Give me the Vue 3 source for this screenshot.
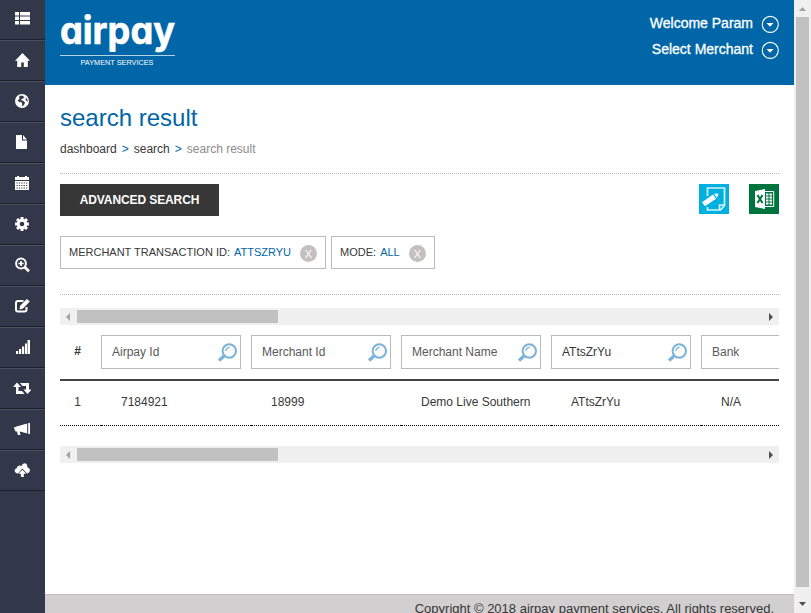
<script setup>
import { ref } from 'vue'

const menu = ['list', 'home', 'globe', 'file', 'calendar', 'cog', 'zoom', 'edit', 'signal', 'retweet', 'horn', 'cloud']
const account = ['Welcome Param', 'Select Merchant']
const filters = ref([
  { label: 'MERCHANT TRANSACTION ID:', value: 'ATTSZRYU', kind: 'long' },
  { label: 'MODE:', value: 'ALL', kind: 'short' },
])
const columns = ref([
  { name: 'Airpay Id', value: '', cell: '7184921' },
  { name: 'Merchant Id', value: '', cell: '18999' },
  { name: 'Merchant Name', value: '', cell: 'Demo Live Southern' },
  { name: 'Transaction Id', value: 'ATtsZrYu', cell: 'ATtsZrYu' },
  { name: 'Bank', value: '', cell: 'N/A' },
])
const teeth = [0, 45, 90, 135, 180, 225, 270, 315]
</script>

<template>
  <div class="screen">
    <nav class="side">
      <a v-for="m in menu" :key="m" class="side-item">
        <svg class="side-icon" viewBox="0 0 18 16" fill="#fff">
          <path v-if="m === 'list'" d="M2 1h4v3.500H2zM7 1h10v3.500H7zM2 5.500h4V9H2zM7 5.500h10V9H7zM2 10h4v3.500H2zM7 10h10v3.500H7z" />
          <path v-else-if="m === 'home'" d="M9.5 1 17 8.8h-2.2V15h-4v-4.500H8.200V15h-4V8.800H2z" />
          <g v-else-if="m === 'globe'">
            <circle cx="9" cy="8" r="7" />
            <path fill="#32374a" d="M8 2.5 5.6 4 6.8 5.2 4.7 7.5l1.2 1.3 2.6.5.8 1.6-.5 2.4 1.8-.8 1.5-3-2.4-2-2.2-.2 1.7-1.5L11 5 10.4 3zM12.6 4.2l1.9 2.3.2 2.4-1.8-1.6z" />
          </g>
          <path v-else-if="m === 'file'" d="M3 1h6v5.500h5V15H3zM10 1l4 4.500h-4z" />
          <g v-else-if="m === 'calendar'">
            <path d="M2 2h2V1h2v1h6V1h2v1h2v3H2z" />
            <path d="M2 6h14v9H2z" />
            <path stroke="#32374a" stroke-dasharray="1.2 1.2" d="M3.5 8h11M3.5 10.5h11M3.5 13h11" />
          </g>
          <g v-else-if="m === 'cog'">
            <rect v-for="t in teeth" :key="t" x="7.5" y="1" width="3" height="4" :transform="`rotate(${t} 9 8)`" />
            <circle cx="9" cy="8" r="3.8" fill="none" stroke="#fff" stroke-width="3" />
          </g>
          <g v-else-if="m === 'zoom'" fill="none" stroke="#fff">
            <circle cx="8" cy="6.5" r="4.9" stroke-width="2" />
            <path stroke-width="1.7" d="M5.4 6.5h5.2M8 3.9v5.2" />
            <path stroke-width="2.8" d="m11.5 10 4.5 4.2" />
          </g>
          <g v-else-if="m === 'edit'">
            <path fill="none" stroke="#fff" stroke-width="2" d="M10.5 3H5Q3 3 3 5v6.500q0 2 2 2h6.500q2 0 2-2V9" />
            <path d="m6.500 11.400.7-3.600L13.800 1l3 2.400-6.800 7z" />
          </g>
          <path v-else-if="m === 'signal'" d="M3 12h2.200v3H3zM6 10h2.200v5H6zM9 7.500h2.200V15H9zM12 4.500h2V15h-2zM14.500 1H17v14h-2.500z" />
          <path v-else-if="m === 'retweet'" d="M4 2.500 8 7H5.500v4H9l2.700 3H3V7H0zM7 3h9v6.500h2.800L14.500 14 10.500 9.500H13V6H9.500z" />
          <path v-else-if="m === 'horn'" d="M15.200 2H17v11h-1.800zM14.200 2.500v10L8 10.700H6.700l.8 3.300H4.800L4 10.500H2.500L.8 6.500l2.700-1z" />
          <g v-else>
            <path d="M5 11.500C.8 11.200.8 7 3.800 6.300 4 3.500 7 2.700 8.500 4 10-.5 15 .6 14.200 5.200 18 6 17.700 10.700 14 11.500L9.300 6.500z" />
            <path d="m9.300 7.800 4 4h-2.500V15H7.900v-3.200H5.400z" />
          </g>
        </svg>
      </a>
    </nav>

    <main class="main">
      <header class="header">
        <svg class="logo" viewBox="0 0 116 56" fill="#fff">
          <text class="logo-name" x="0" y="31" textLength="115" lengthAdjust="spacingAndGlyphs">airpay</text>
          <rect y="42" width="115" height="1" opacity=".7" />
          <text class="logo-sub" x="20.500" y="51.500" textLength="73" lengthAdjust="spacingAndGlyphs">PAYMENT SERVICES</text>
        </svg>
        <div class="account">
          <div v-for="a in account" :key="a" class="account-line">
            <span>{{ a }}</span>
            <svg width="18" height="18" viewBox="0 0 18 18">
              <circle cx="9.300" cy="9.400" r="8" fill="none" stroke="#fff" stroke-width="1.100" />
              <path fill="#fff" d="M5.500 8h7L9 11.700z" />
            </svg>
          </div>
        </div>
      </header>

      <section class="content">
        <h1>search result</h1>
        <div class="crumbs">
          <span>dashboard</span><b>&gt;</b><span>search</span><b>&gt;</b><span class="here">search result</span>
        </div>

        <div class="actions">
          <button class="advanced">ADVANCED SEARCH</button>
          <div class="exports">
            <svg width="30" height="30" viewBox="0 0 30 30">
              <path fill="#00b1df" d="M0 0h30v30H0z" />
              <path fill="none" stroke="#d5f2fa" stroke-width="1.700" d="M8.500 12V4h17v17.500L21.500 26H8.500v-3M25 21h-4.500v4.500" />
              <path stroke="#00b1df" stroke-width="8" d="m5 20 13-9" />
              <path fill="#fff" d="m3 18.200 11-7.700 3 4.200-11 7.600zM15 9.800l4.700-.3-1.800 4.500z" />
            </svg>
            <svg width="30" height="30" viewBox="0 0 30 30">
              <path fill="#00743f" d="M0 0h30v30H0z" />
              <path fill="#fff" d="m6 7 10-2v20L6 23z" />
              <path fill="none" stroke="#fff" stroke-width="1" d="M16 7.500h8.700v15H16" />
              <path fill="none" stroke="#00743f" stroke-width="2" d="m8.500 11 5 8M13.500 11l-5 8" />
              <path stroke="#fff" stroke-width="1.900" stroke-dasharray="2.500 1" d="M17 10.500h6M17 13.500h6M17 16.500h6M17 19.500h6" />
            </svg>
          </div>
        </div>

        <div class="filters">
          <div v-for="f in filters" :key="f.label" class="filter" :class="f.kind">
            <span class="filter-text">{{ f.label }} <em>{{ f.value }}</em></span>
            <span class="remove">X</span>
          </div>
        </div>

        <div class="results">
          <div class="hscroll">
            <svg width="17" height="17"><path fill="#a3a3a3" d="M10 5v8L6 9z" /></svg>
            <i></i>
            <svg width="17" height="17"><path fill="#505050" d="M7 5v8l4-4z" /></svg>
          </div>
          <div class="grid">
            <div class="row head">
              <div class="num">#</div>
              <div v-for="c in columns" :key="c.name" class="col">
                <div class="field" :class="{ filled: c.value }">
                  <span>{{ c.value || c.name }}</span>
                  <svg width="20" height="20" viewBox="0 0 20 20" fill="none" stroke="#7ab3d9">
                    <path stroke-width="3.200" d="m2 18.500 5-4.500" />
                    <circle cx="12.300" cy="9" r="6.700" fill="#fafafa" stroke-width="2" />
                    <path stroke-width="1.200" d="M8.800 9q.3-3.300 3.800-3.700" />
                  </svg>
                </div>
              </div>
            </div>
            <div class="row body">
              <div class="num">1</div>
              <div v-for="c in columns" :key="c.name" class="col cell">{{ c.cell }}</div>
            </div>
          </div>
          <div class="hscroll">
            <svg width="17" height="17"><path fill="#a3a3a3" d="M10 5v8L6 9z" /></svg>
            <i></i>
            <svg width="17" height="17"><path fill="#505050" d="M7 5v8l4-4z" /></svg>
          </div>
        </div>
      </section>

      <footer class="footer">Copyright © 2018 airpay payment services. All rights reserved.</footer>
    </main>

    <div class="vscroll">
      <svg width="17" height="17"><path fill="#a3a3a3" d="M5 11h7L8.500 7z" /></svg>
      <i></i>
      <svg class="down" width="17" height="17"><path fill="#505050" d="M5 6h7l-3.500 4z" /></svg>
    </div>
  </div>
</template>

<style>
body { margin: 0; overflow: hidden; }
</style>

<style scoped>
* { box-sizing: border-box; }
.screen { display: flex; width: 811px; height: 613px; overflow: hidden; background: #fff; color: #373737; font: 12px/14px "Liberation Sans", Arial, sans-serif; }
svg { display: block; flex: none; }
.side { flex: none; width: 45px; background: #32374a; }
.side-item { display: flex; justify-content: center; height: 41px; padding: 11px 2px 0 0; border-top: 1px solid #4a4e5d; border-bottom: 1px solid #1e212d; }
.side-item:first-child { height: 40px; border-top: 0; }
.side-icon { width: 18px; height: 16px; }
.main { flex: none; width: 749px; display: flex; flex-direction: column; }
.header { flex: none; display: flex; justify-content: space-between; height: 85px; padding: 13px 15px 0; background: #0066a7; color: #fff; }
.logo { width: 116px; height: 56px; overflow: visible; }
.logo-name { font: 700 38px Inter, sans-serif; font-feature-settings: "cv11" 1; stroke: #fff; stroke-width: .6px; }
.logo-sub { font: 7px "Liberation Sans", sans-serif; }
.account { display: flex; flex-direction: column; gap: 8px; padding-top: 2px; font-size: 14px; -webkit-text-stroke: .3px #fff; }
.account-line { display: flex; justify-content: flex-end; align-items: center; gap: 8px; height: 18px; }
.account-line span { padding-bottom: 2px; }
.content { flex: 1; padding: 18px 15px 0; }
h1 { margin: 0; font-size: 24px; line-height: 30px; font-weight: 400; color: #0066a7; }
.crumbs { display: flex; gap: 5px; height: 41px; padding-top: 9px; border-bottom: 1px dotted #b5b5b5; }
.crumbs b { font-weight: 400; color: #0066a7; }
.crumbs .here { color: #8c8c8c; }
.actions { display: flex; justify-content: space-between; padding-top: 10px; }
.advanced { width: 159px; height: 32px; padding: 0; border: 0; background: #373737; color: #fff; font: 700 12px "Liberation Sans", sans-serif; letter-spacing: -.1px; }
.exports { display: flex; gap: 20px; }
.filters { display: flex; gap: 5px; height: 79px; padding-top: 20px; border-bottom: 1px dotted #b5b5b5; }
.filter { display: flex; justify-content: space-between; height: 33px; padding: 8px 8px 0; border: 1px solid #bbb; font-size: 11px; }
.long { width: 266px; }
.short { width: 104px; }
.filter-text { white-space: nowrap; }
.filter em { margin-left: 1px; font-style: normal; color: #0066a7; }
.remove { width: 17px; height: 17px; border-radius: 50%; background: #c4c0c0; color: #fff; text-align: center; line-height: 18px; }
.results { padding-top: 13px; }
.hscroll { display: flex; align-items: center; height: 17px; background: #f0f0f0; }
.hscroll i { width: 201px; height: 13px; margin-right: auto; background: #c1c1c1; }
.grid { overflow: hidden; height: 121px; }
.row { display: flex; width: 791px; }
.num { flex: none; width: 41px; padding-right: 6px; text-align: center; }
.col { flex: none; width: 150px; }
.head { height: 56px; padding-top: 10px; border-bottom: 2px solid #464344; }
.head .num { padding-top: 9px; font-weight: 700; }
.field { display: flex; align-items: center; justify-content: space-between; width: 140px; height: 34px; padding: 0 3px 0 10px; border: 1px solid #bbb; color: #595959; }
.field.filled { color: #373737; }
.body > div { height: 45px; padding-top: 14px; border-bottom: 1px dotted #000; }
.body .cell { padding-left: 20px; }
.footer { flex: none; height: 19px; padding: 6px 20px 0; border-top: 1px solid #bebcbc; background: #d1cfcf; text-align: right; font-size: 13px; line-height: 15px; }
.vscroll { flex: none; display: flex; flex-direction: column; align-items: center; width: 17px; background: #f0f0f0; }
.vscroll i { width: 13px; height: 570px; background: #c1c1c1; }
.down { margin-top: 9px; }
</style>
